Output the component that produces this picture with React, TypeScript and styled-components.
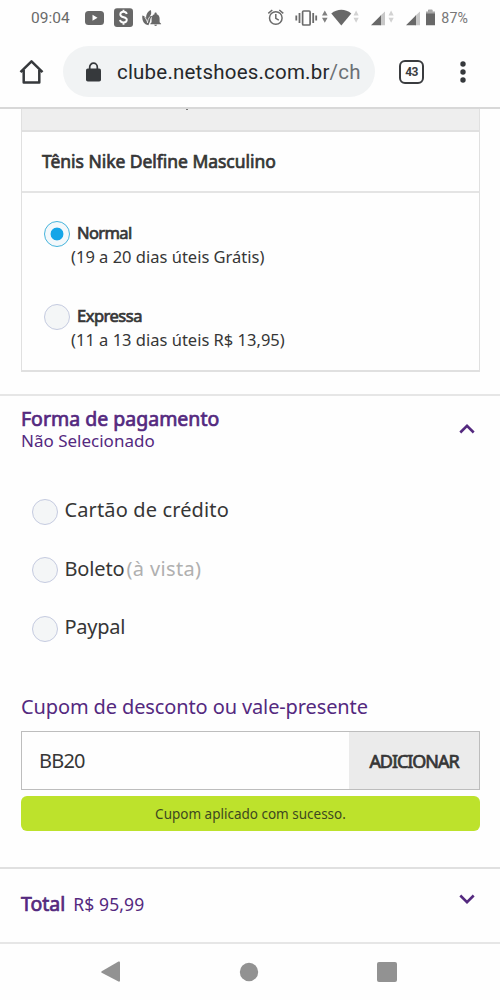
import React from "react";
import styled, { createGlobalStyle } from "styled-components";

const Global = createGlobalStyle`
  * { box-sizing: border-box; }
  body { margin: 0; background: #fefefe; font-family: "Noto Sans", "Open Sans", sans-serif; color: #333; }
`;

const Screen = styled.div`
  width: 500px;
  height: 1000px;
  overflow: hidden;
  display: flex;
  flex-direction: column;
  background: #fefefe;
`;

const StatusBar = styled.div`
  height: 36px;
  flex: none;
  display: flex;
  align-items: center;
  padding: 0 32px 0 31px;
  font: 15.5px/36px Roboto, sans-serif;
  color: #6a6a6a;
`;

const Clock = styled.span`
  width: 53px;
`;

const StatusIcons = styled.svg`
  display: block;
  flex: none;
`;

const Battery = styled.span`
  font-size: 14.2px;
  color: #777;
  margin-left: 5px;
  letter-spacing: 0.1px;
`;

const Toolbar = styled.header`
  height: 73px;
  flex: none;
  display: flex;
  align-items: center;
  padding: 0 0 0 19px;
  border-bottom: 2px solid #d8d8d8;
`;

const Address = styled.div`
  width: 312px;
  height: 51px;
  margin: 0 24px 0 19px;
  border-radius: 26px;
  background: #f1f3f4;
  display: flex;
  align-items: center;
  gap: 16px;
  padding-left: 23px;
  font: 20.5px/51px Roboto, sans-serif;
  color: #26282b;
  white-space: nowrap;
`;

const Url = styled.span`
  letter-spacing: 0.2px;
  padding-top: 2px;
`;

const Path = styled.span`
  color: #6b7075;
`;

const TabCount = styled.div`
  width: 25px;
  height: 24px;
  border: 2.5px solid #3a3c3f;
  border-radius: 6px;
  font: bold 12px/20px Roboto, sans-serif;
  letter-spacing: -0.7px;
  color: #3a3c3f;
  text-align: center;
`;

const MenuIcon = styled.svg`
  margin-left: 36px;
`;

const Card = styled.section`
  margin: 0 20px 0 21px;
  height: 263px;
  flex: none;
  border: solid #e0e0e0;
  border-width: 0 1.5px 2px;
`;

const CardStrip = styled.div`
  height: 23px;
  background: #eee;
  border-bottom: 2px solid #e0e0e0;
  padding-left: 164px;
`;

const Descender = styled.div`
  width: 2px;
  height: 1px;
  background: #777;
`;

const CardTitle = styled.div`
  height: 61px;
  padding: 0 20px 1px;
  border-bottom: 2px solid #e4e4e4;
  display: flex;
  align-items: center;
`;

const Text = styled.span<{ $size: number; $spacing?: number; $strong?: boolean; $tone?: string }>`
  font-size: ${(p) => p.$size}px;
  line-height: 24px;
  letter-spacing: ${(p) => p.$spacing ?? 0}px;
  color: ${(p) => p.$tone ?? "#363636"};
  -webkit-text-stroke: ${(p) => (p.$strong ? "0.7px currentColor" : "0")};
  white-space: nowrap;
`;

const Shipping = styled.div<{ $top: number }>`
  display: grid;
  grid-template-columns: 26px auto;
  column-gap: 7px;
  align-items: start;
  padding: ${(p) => p.$top}px 0 0 22px;
`;

const ShippingText = styled.div`
  display: flex;
  flex-direction: column;
`;

const Detail = styled.div`
  margin-left: -6px;
  height: 24px;
  display: flex;
`;

const Radio = styled.span<{ $checked?: boolean }>`
  width: 26px;
  height: 26px;
  flex: none;
  border-radius: 50%;
  border: 1.5px solid ${(p) => (p.$checked ? "#45b4dc" : "#c5cbe0")};
  background: ${(p) => (p.$checked ? "radial-gradient(circle, #14a5e8 0 6px, #f3f8fb 6.8px)" : "#f4f6f7")};
`;

const Payment = styled.section`
  margin-top: 22px;
  height: 473px;
  flex: none;
  border-top: 2px solid #e6e6e6;
  padding: 12px 20px 0 21px;
`;

const SectionHead = styled.div`
  display: flex;
  align-items: center;
  justify-content: space-between;
  height: 44px;
  padding-right: 5px;
`;

const Titles = styled.div`
  display: flex;
  flex-direction: column;
  span { line-height: 22px; }
`;

const Options = styled.div`
  display: flex;
  flex-direction: column;
  gap: 32.6px;
  padding: 46.6px 0 0 11px;
`;

const Option = styled.div`
  display: flex;
  align-items: center;
  height: 26px;
`;

const Label = styled.div`
  display: flex;
  gap: 2px;
  margin: -3px 0 0 6.5px;
`;

const CouponTitle = styled.div`
  height: 24px;
  margin: 53.4px 0 12px;
`;

const Coupon = styled.div`
  height: 59px;
  display: flex;
  border: 1.5px solid #bdbdbd;
`;

const CouponInput = styled.div`
  flex: 1;
  display: flex;
  align-items: center;
  padding-left: 17px;
`;

const AddButton = styled.div`
  width: 130px;
  background: #ebebeb;
  display: flex;
  align-items: center;
  justify-content: center;
`;

const Success = styled.div`
  height: 35px;
  margin-top: 6px;
  border-radius: 6px;
  background: #bde22c;
  display: flex;
  align-items: center;
  justify-content: center;
`;

const Total = styled.section`
  height: 75px;
  flex: none;
  border-top: 2px solid #e0e0e0;
  padding: 0 25px 3px 21px;
  display: flex;
  align-items: center;
  justify-content: space-between;
`;

const Amount = styled.div`
  display: flex;
  align-items: baseline;
  gap: 8px;
`;

const Chevron = styled.svg<{ $lift?: number }>`
  margin-bottom: ${(p) => p.$lift ?? 0}px;
`;

const NavBar = styled.nav`
  height: 58px;
  flex: none;
  border-top: 2px solid #e6e6e6;
  display: flex;
  align-items: center;
  padding: 0 103px 1px 101px;
  justify-content: space-between;
`;

const purple = "#54297f";

const LeftStatus = () => (
  <StatusIcons width="80" height="24" viewBox="84 6 80 24" fill="#686868">
    <rect x="85" y="11" width="19" height="14" rx="3.5" />
    <path d="M92.5 14.7v6l5-3z" fill="#fff" />
    <rect x="114" y="8.3" width="19" height="18.7" rx="3" />
    <path d="M126.8 14c-.4-1.700-1.800-2.300-3.300-2.300-1.800 0-3.200 1-3.200 2.700 0 3.800 6.500 2 6.500 5.400 0 1.700-1.400 2.700-3.300 2.700-1.800 0-3.200-.8-3.500-2.600M123.500 9.800v2M123.500 22.400v2.400" fill="none" stroke="#fff" strokeWidth="1.900" />
    <path d="M142.300 15.500c2.300.6 3.700 2 4 3.700-.6-3.600.6-7.200 4.400-9.200 1 2.500.6 4.600-.9 6.200 1-.3 1.700-.3 2.600-.1-1.800 1.400-2.300 3.300-2.300 5.200l-1.700 3.900c-4.200-.6-6.600-4.200-6.100-9.700z" />
    <path d="M144.600 17.500c1.700 1.500 2.600 3.300 2.900 5.300.2-2.300 1-4.500 2.500-6.300" fill="none" stroke="#fefefe" strokeWidth=".8" />
    <path d="M150.300 23.700l1.300-1.500v-3.700c0-2.200 1.200-3.800 2.900-4.300v-.7c0-1.300 2.200-1.300 2.200 0v.7c1.800.5 2.900 2.100 2.900 4.300v3.700l1.500 1.500v.6h-10.800zM154.200 24.800h2.900c0 1.500-2.900 1.500-2.900 0z" />
  </StatusIcons>
);

const RightStatus = () => (
  <StatusIcons width="170" height="24" viewBox="266 6 170 24" fill="#686868">
    <g fill="none" stroke="#6b6b6b" strokeWidth="1.5">
      <circle cx="275.800" cy="18" r="6.300" />
      <path d="M275.800 14v4.300l3 1.800M268.300 13.300l4-3.300M283.300 13.300l-4-3.300" />
      <rect x="302.600" y="11" width="7.500" height="14" rx="1" strokeWidth="1.700" />
      <path d="M299.500 13v10M296.300 15.500v5M313.200 13v10M316.200 15.500v5" strokeWidth="1.800" />
    </g>
    <path d="M322 15.500l2.800-5 2.800 5zM322 17.700h5.600l-2.800 5z" fill="#808080" />
    <path d="M331.300 13.500c6-5 14-5 20 0l-10 12z" />
    <path d="M353.500 15.500l2.600-5 2.600 5zM353.500 17.700h5.200l-2.600 5z" fill="#d2d2d2" />
    <path d="M385 11.500v13.800h-5V16z" fill="#c8c8c8" />
    <path d="M371 25.300l10-10v10z" />
    <path d="M388.500 15.500l2.600-5 2.600 5zM388.500 17.700h5.200l-2.600 5z" fill="#d2d2d2" />
    <path d="M420 11.500v13.800h-5V16z" fill="#c8c8c8" />
    <path d="M406 25.300l10-10v10z" />
    <path d="M426 12h2.300v-2h4v2h2.700v13.300h-9z" />
    <path d="M426 11.500h2.300v-2h4v2h2.700v2h-9z" fill="#a8a8a8" />
  </StatusIcons>
);

const Spacer = styled.div`
  flex: 1;
`;

const payments = [
  { label: "Cartão de crédito", spacing: 0.13 },
  { label: "Boleto", spacing: -0.15, note: "(à vista)" },
  { label: "Paypal", spacing: -0.25 },
];

const shippings = [
  { name: "Normal", detail: "(19 a 20 dias úteis Grátis)", checked: true, top: 28, spacing: -0.6 },
  { name: "Expressa", detail: "(11 a 13 dias úteis R$ 13,95)", checked: false, top: 35, spacing: -0.5 },
];

export default function App() {
  return (
    <Screen>
      <Global />
      <StatusBar>
        <Clock>09:04</Clock>
        <LeftStatus />
        <Spacer />
        <RightStatus />
        <Battery>87%</Battery>
      </StatusBar>
      <Toolbar>
        <svg width="25" height="26" viewBox="0 0 25 26" fill="none" stroke="#36393c" strokeWidth="2.500">
          <path d="M1.500 13.200L12.500 2.300l11 10.900M4.700 11v12.500h15.600V11" strokeLinejoin="round" />
        </svg>
        <Address>
          <svg width="15" height="20" viewBox="0 0 15 20">
            <rect y="6.500" width="15" height="13" rx="1.800" fill="#36393c" />
            <path d="M3.700 7V5a3.800 3.800 0 0 1 7.600 0v2" fill="none" stroke="#36393c" strokeWidth="1.700" />
          </svg>
          <Url>clube.netshoes.com.br<Path>/ch</Path></Url>
        </Address>
        <TabCount>43</TabCount>
        <MenuIcon width="6" height="22" viewBox="0 0 6 22" fill="#36393c">
          <circle cx="3" cy="3" r="2.700" />
          <circle cx="3" cy="11" r="2.700" />
          <circle cx="3" cy="19" r="2.700" />
        </MenuIcon>
      </Toolbar>
      <Card>
        <CardStrip><Descender /></CardStrip>
        <CardTitle>
          <Text $size={17.5} $spacing={-0.04} $strong>Tênis Nike Delfine Masculino</Text>
        </CardTitle>
        {shippings.map((s) => (
          <Shipping key={s.name} $top={s.top}>
            <Radio $checked={s.checked} />
            <ShippingText>
              <Text $size={16.5} $spacing={s.spacing} $strong>{s.name}</Text>
              <Detail><Text $size={16.5}>{s.detail}</Text></Detail>
            </ShippingText>
          </Shipping>
        ))}
      </Card>
      <Payment>
        <SectionHead>
          <Titles>
            <Text $size={19.5} $tone={purple} $strong>Forma de pagamento</Text>
            <Text $size={17} $tone={purple}>Não Selecionado</Text>
          </Titles>
          <Chevron $lift={2} width="16" height="10" viewBox="0 0 16 10" fill="none" stroke={purple} strokeWidth="2.600">
            <path d="M1.300 8.500L8 1.900l6.700 6.600" />
          </Chevron>
        </SectionHead>
        <Options>
          {payments.map((p) => (
            <Option key={p.label}>
              <Radio />
              <Label>
                <Text $size={20} $spacing={p.spacing}>{p.label}</Text>
                {p.note && <Text $size={20} $spacing={0.35} $tone="#b0b0b0">{p.note}</Text>}
              </Label>
            </Option>
          ))}
        </Options>
        <CouponTitle>
          <Text $size={20} $spacing={-0.12} $tone={purple}>Cupom de desconto ou vale-presente</Text>
        </CouponTitle>
        <Coupon>
          <CouponInput><Text $size={20} $spacing={-0.8}>BB20</Text></CouponInput>
          <AddButton><Text $size={18} $spacing={-1.05} $strong>ADICIONAR</Text></AddButton>
        </Coupon>
        <Success><Text $size={13.5} $tone="#3e4820">Cupom aplicado com sucesso.</Text></Success>
      </Payment>
      <Total>
        <Amount>
          <Text $size={19.5} $tone={purple} $strong>Total</Text>
          <Text $size={17.5} $spacing={0.1} $tone={purple}>R$ 95,99</Text>
        </Amount>
        <Chevron $lift={10} width="16" height="10" viewBox="0 0 16 10" fill="none" stroke={purple} strokeWidth="2.600">
          <path d="M1.300 1.500L8 8.100l6.700-6.600" />
        </Chevron>
      </Total>
      <NavBar>
        <svg width="20" height="22" viewBox="0 0 20 22" fill="#929292"><path d="M.7 10.200L17.500.5Q19 0 19 1.500v18q0 1.500-1.500 1L.7 11.800Q-.2 11 .7 10.200z" /></svg>
        <svg width="20" height="20" viewBox="0 0 20 20" fill="#929292"><circle cx="10" cy="10" r="9.200" /></svg>
        <svg width="20" height="20" viewBox="0 0 20 20" fill="#929292"><rect width="20" height="20" rx="2" /></svg>
      </NavBar>
    </Screen>
  );
}
